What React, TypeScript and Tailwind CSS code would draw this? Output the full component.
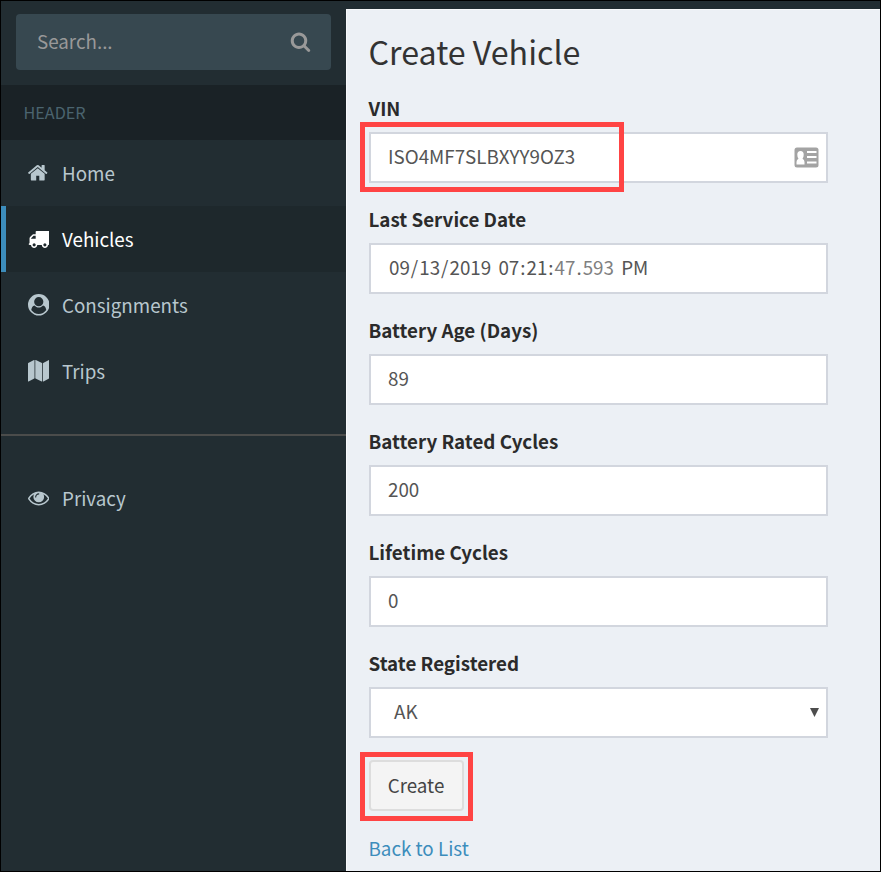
import type { ReactNode } from "react";

const ICONS = {
  home: "M1472 992v480q0 26-19 45t-45 19h-384v-384h-256v384h-384q-26 0-45-19t-19-45v-480q0-1 .5-3t.5-3l575-474 575 474q1 2 1 6zm223-69l-62 74q-8 9-21 11h-3q-13 0-21-7l-692-577-692 577q-12 8-24 7-13-2-21-11l-62-74q-8-10-7-23.5t11-21.5l719-599q32-26 76-26t76 26l244 204v-195q0-14 9-23t23-9h192q14 0 23 9t9 23v408l219 182q10 8 11 21.5t-7 23.5z",
  search:
    "M1216 832q0-185-131.5-316.5t-316.5-131.5-316.5 131.5-131.5 316.5 131.5 316.5 316.5 131.5 316.5-131.5 131.5-316.5zm512 832q0 52-38 90t-90 38q-54 0-90-38l-343-342q-179 124-399 124-143 0-273.5-55.5t-225-150-150-225-55.5-273.5 55.5-273.5 150-225 225-150 273.5-55.5 273.5 55.5 225 150 150 225 55.5 273.5q0 220-124 399l343 343q37 37 37 90z",
  truck:
    "M640 1408q0-52-38-90t-90-38-90 38-38 90 38 90 90 38 90-38 38-90zm-384-512h384v-256h-158q-13 0-22 9l-195 195q-9 9-9 22v30zm1280 512q0-52-38-90t-90-38-90 38-38 90 38 90 90 38 90-38 38-90zm256-1088v1024q0 15-4 26.5t-13.5 18.5-16.5 11.5-23.5 6-22.5 2-25.5 0-22.5-.5q0 106-75 181t-181 75-181-75-75-181h-384q0 106-75 181t-181 75-181-75-75-181h-64q-3 0-22.5.5t-25.5 0-22.5-2-23.5-6-16.5-11.5-13.5-18.5-4-26.5q0-26 19-45t45-19v-320q0-8-.5-35t0-38 2.5-34.5 6.5-37 14-30.5 22.5-30l198-198q19-19 50.5-32t58.5-13h160v-192q0-26 19-45t45-19h1024q26 0 45 19t19 45z",
  user: "M1523 1339q-22-155-87.5-257.5t-184.5-118.5q-67 74-159.5 115.5t-195.5 41.5-195.5-41.5-159.5-115.5q-119 16-184.5 118.5t-87.5 257.5q106 150 271 237.5t356 87.5 356-87.5 271-237.5zm-243-699q0-159-112.5-271.5t-271.5-112.5-271.5 112.5-112.5 271.5 112.5 271.5 271.5 112.5 271.5-112.5 112.5-271.5zm512 256q0 182-71 347.5t-190.5 286-285.5 191.5-349 71q-182 0-348-71t-286-191-191-286-71-348 71-348 191-286 286-191 348-71 348 71 286 191 191 286 71 348z",
  map: "M512 0q13 0 22.5 9.5t9.5 22.5v1472q0 20-17 28l-480 256q-7 4-15 4-13 0-22.5-9.5t-9.5-22.5v-1472q0-20 17-28l480-256q7-4 15-4zm1248 0q13 0 22.5 9.5t9.5 22.5v1472q0 20-17 28l-480 256q-7 4-15 4-13 0-22.5-9.5t-9.5-22.5v-1472q0-20 17-28l480-256q7-4 15-4zm-1120 0q8 0 14 3l512 256q18 10 18 29v1472q0 13-9.5 22.5t-22.5 9.5q-8 0-14-3l-512-256q-18-10-18-29v-1472q0-13 9.5-22.5t22.5-9.5z",
  eye: "M1664 960q-152-236-381-353 61 104 61 225 0 185-131.5 316.5t-316.5 131.5-316.5-131.5-131.5-316.5q0-121 61-225-229 117-381 353 133 205 333.5 326.5t434.5 121.5 434.5-121.5 333.5-326.5zm-720-384q0-20-14-34t-34-14q-125 0-214.5 89.5t-89.5 214.5q0 20 14 34t34 14 34-14 14-34q0-86 61-147t147-61q20 0 34-14t14-34zm848 384q0 34-20 69-140 230-376.5 368.5t-499.5 138.5-499.5-139-376.5-368q-20-35-20-69t20-69q140-229 376.5-368t499.5-139 499.5 139 376.5 368q20 35 20 69z",
};

function Icon({ name, className }: { name: keyof typeof ICONS; className: string }) {
  return (
    <svg viewBox="0 0 1792 1792" fill="currentColor" className={className} aria-hidden="true">
      <path d={ICONS[name]} />
    </svg>
  );
}

function NavItem({ icon, label, active = false }: { icon: keyof typeof ICONS; label: string; active?: boolean }) {
  return (
    <a
      className={
        active
          ? "flex h-[66px] items-center border-l-[5px] border-[#3c8dbc] bg-[#1e282c] pl-[21.500px] text-white"
          : "flex h-[66px] items-center border-l-[5px] border-transparent pl-[21.500px] text-[#b8c7ce]"
      }
    >
      <Icon
        name={icon}
        className={
          icon === "home" ? "mr-[14px] ml-[-1px] size-[21.500px] shrink-0" : "mr-[13px] size-[21.500px] shrink-0"
        }
      />
      <span className="pb-[1px] text-[18.800px] leading-[30px]">{label}</span>
    </a>
  );
}

function Field({ label, children }: { label: string; children: ReactNode }) {
  return (
    <div className="mb-[21px] flex flex-col">
      <label className="mb-[9px] ml-[-0.500px] text-[18.800px] leading-[30px] font-bold text-[#2b2b2b]">{label}</label>
      <div className="relative flex h-[51px] items-center border-2 border-[#d2d6de] bg-white px-[17px] pb-[3px] text-[18.800px] leading-[30px] text-[#555]">
        {children}
      </div>
    </div>
  );
}

function DatePart({ children, muted = false }: { children: string; muted?: boolean }) {
  return <span className={muted ? "px-[1px] text-[#808080]" : "px-[1px]"}>{children}</span>;
}

function IdCard() {
  return (
    <svg viewBox="0 0 25 21" className="mt-[3px] mr-[-10px] ml-auto h-[21px] w-[25px]" aria-hidden="true">
      <rect x="0.5" y="0.5" width="24" height="20" rx="2.5" fill="#a3a3a3" />
      <path
        d="M2.500 17.500v-2.500q0-2.500 2-3.200Q3.300 10.500 3.300 7.500q0-3.600 3.200-3.600t3.200 3.600q0 3-1.200 4.300 2 .7 2 3.200v2.500zM13 4h9.500v2H13zM13 9h9.500v2H13zM13 14.500h9.500v2H13z"
        fill="#fff"
      />
    </svg>
  );
}

export default function App() {
  return (
    <div className="relative flex h-[872px] w-[881px] overflow-hidden border border-black bg-[#222d32] font-['Noto_Sans_CJK_SC','Noto_Sans',sans-serif]">
      <aside className="flex w-[345px] shrink-0 flex-col">
        <div className="mx-[15px] mt-[13px] mb-[15px] flex h-[56px] items-center rounded-[4px] bg-[#374850] pr-[20px] pb-[2px] pl-[21px] text-[#999]">
          <span className="text-[18.800px] leading-[30px]">Search...</span>
          <Icon name="search" className="ml-auto size-[21px]" />
        </div>
        <div className="flex h-[55px] items-center bg-[#1a2226] pb-[2px] pl-[22.500px] text-[16.200px] leading-[24px] text-[#4b646f]">
          HEADER
        </div>
        <nav className="flex flex-col">
          <NavItem icon="home" label="Home" />
          <NavItem icon="truck" label="Vehicles" active />
          <NavItem icon="user" label="Consignments" />
          <NavItem icon="map" label="Trips" />
          <hr className="mt-[30px] mb-[29px] border-t-2 border-[#4b4c4b]" />
          <NavItem icon="eye" label="Privacy" />
        </nav>
      </aside>

      <main className="mt-[8px] flex grow flex-col border-t border-l border-[#f8f9fb] bg-[#ecf0f5] pr-[52px] pl-[22px]">
        <h1 className="mt-[21px] mb-[17px] ml-[-0.500px] text-[32.200px] leading-[40px] font-normal text-[#333]">
          Create Vehicle
        </h1>
        <form className="mt-[5px] flex flex-col">
          <Field label="VIN">
            <span>ISO4MF7SLBXYY9OZ3</span>
            <IdCard />
            <div className="absolute top-[-12px] left-[-11px] h-[70px] w-[264px] border-5 border-[#ff4444]" />
          </Field>
          <Field label="Last Service Date">
            <span className="whitespace-pre [word-spacing:1px]">
              <DatePart>09</DatePart>/<DatePart>13</DatePart>/<DatePart>2019</DatePart>{" "}
              <DatePart>07</DatePart>:<DatePart>21</DatePart>:<DatePart muted>47</DatePart>
              <span className="text-[#666]">.</span>
              <DatePart muted>593</DatePart> <DatePart>PM</DatePart>
            </span>
          </Field>
          <Field label="Battery Age (Days)">89</Field>
          <Field label="Battery Rated Cycles">200</Field>
          <Field label="Lifetime Cycles">0</Field>
          <Field label="State Registered">
            <span className="ml-[6px]">AK</span>
            <svg viewBox="0 0 9 9" className="mt-[3px] mr-[-10px] ml-auto size-[9px]" aria-hidden="true">
              <path d="M0 0h9L4.500 9z" fill="#4d4d4d" />
            </svg>
          </Field>
          <div className="relative mt-[1px] h-[51px] w-[95px]">
            <button
              type="button"
              className="h-[51px] w-[95px] rounded-[4px] border-2 border-[#ddd] bg-[#f4f4f4] pr-[1px] pb-[2px] text-[18.800px] leading-[30px] text-[#444]"
            >
              Create
            </button>
            <div className="absolute top-[-8px] left-[-9px] h-[69px] w-[113px] border-5 border-[#ff4444]" />
          </div>
        </form>
        <a className="mt-[22px] ml-[-0.500px] text-[18.800px] leading-[30px] text-[#3c8dbc]">Back to List</a>
      </main>
    </div>
  );
}
